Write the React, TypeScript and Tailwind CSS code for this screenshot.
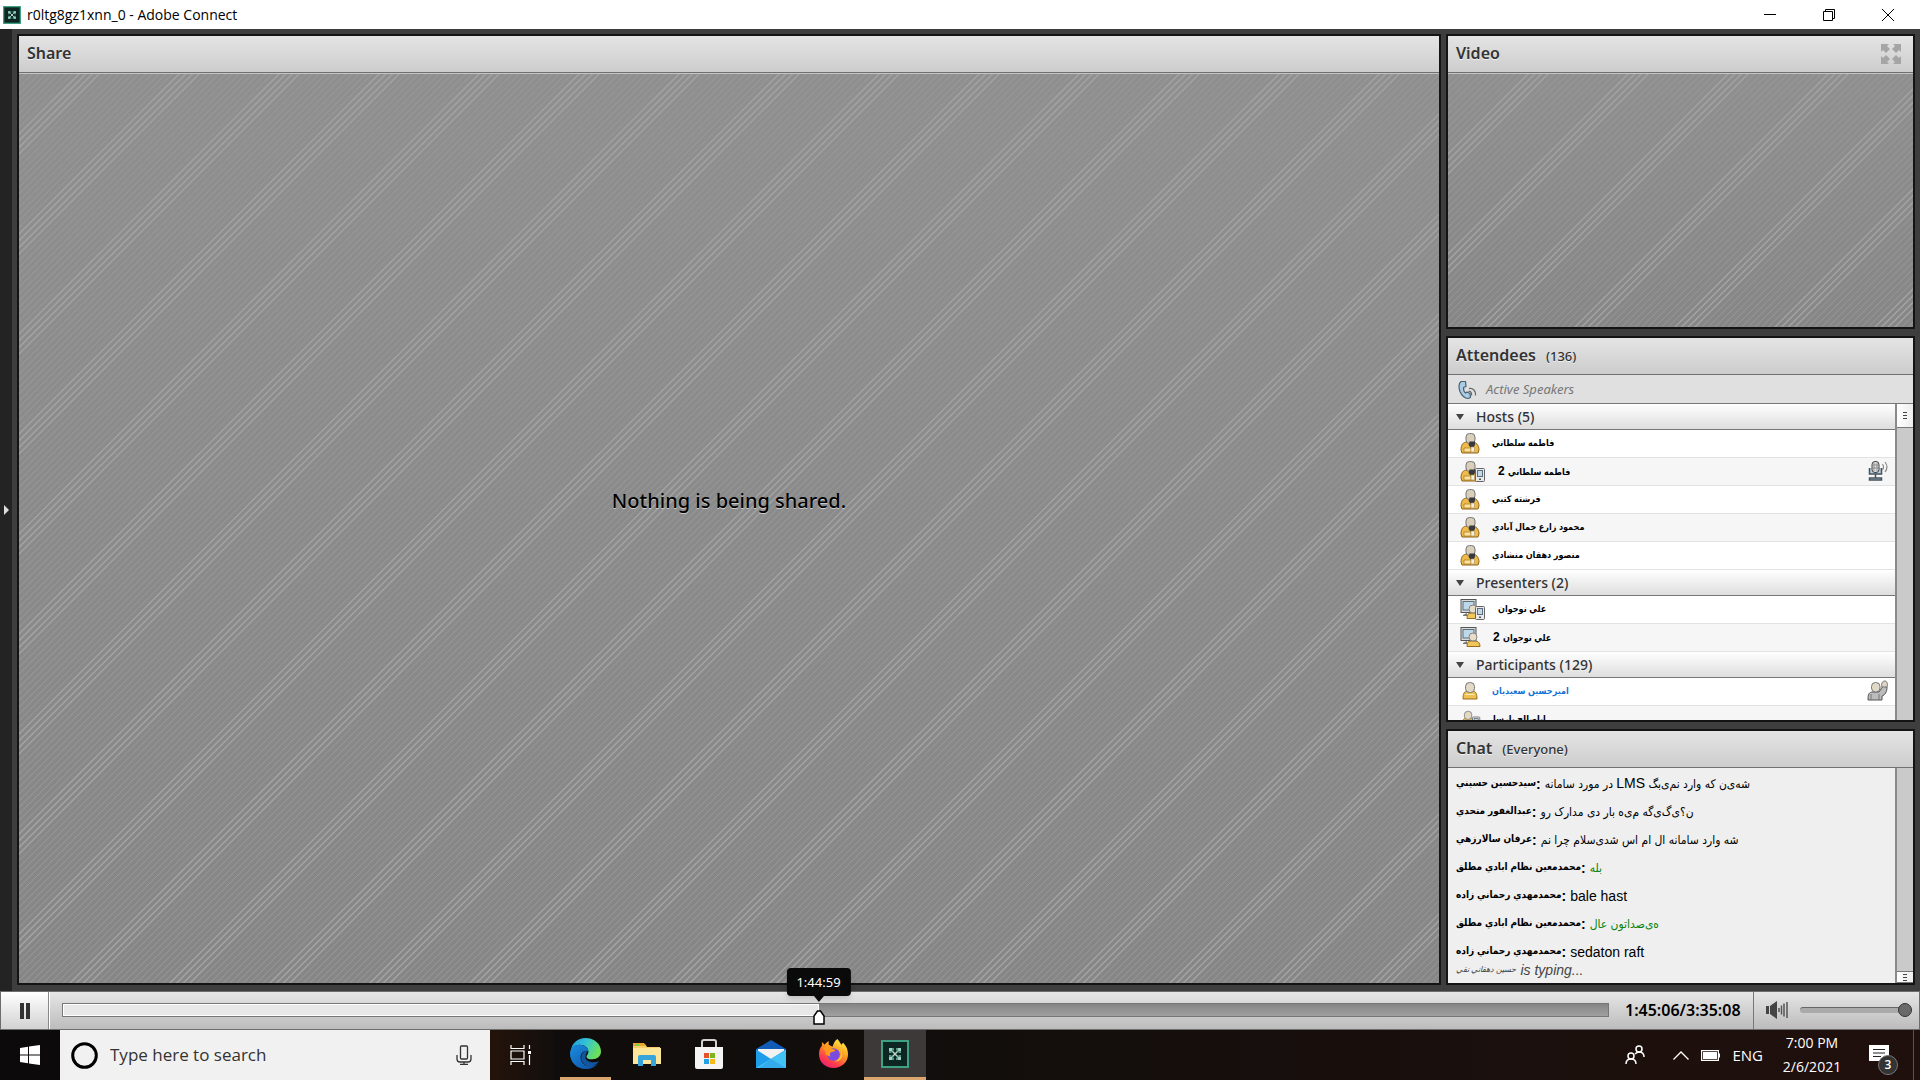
// src/App.tsx
import React, { useState } from 'react';

type IconProps = { className?: string };

/* ---------- Pod chrome ---------- */

interface PodProps {
  title: string;
  note?: string;
  className?: string;
  action?: React.ReactNode;
  children: React.ReactNode;
}

const Pod: React.FC<PodProps> = ({ title, note, className = '', action, children }) => (
  <section className={`flex flex-col min-h-0 min-w-0 border-2 border-[#141414] bg-[#efefef] overflow-hidden ${className}`}>
    <header className="flex items-center justify-between h-[37px] shrink-0 pl-2 pr-3 border-b border-[#707070] bg-linear-to-b from-[#e4e4e4] to-[#cdcdcd]">
      <h2 className="flex items-baseline gap-2.5 pb-0.5 text-base font-semibold text-[#333] [text-shadow:0_1px_0_#f2f2f2]">
        {title}
        {note && <span className="text-[13px] font-medium">{note}</span>}
      </h2>
      {action}
    </header>
    {children}
  </section>
);

const STRIPES = Array.from({ length: 30 }, (_, k) => ({ x: (k * 100) / 15, bright: k % 15 >= 9 && k % 15 <= 12 }));

const Stripes: React.FC<{ id: string; offset?: number; children?: React.ReactNode }> = ({ id, offset = 0, children }) => (
  <div className="relative flex flex-1 min-h-0 items-center justify-center border-t border-[#c4c4c4] bg-linear-to-b from-[#8f8f8f] to-[#868686]">
    <svg className="absolute inset-0 w-full h-full" aria-hidden="true">
      <defs>
        <pattern id={id} x={offset} width="100" height="100" patternUnits="userSpaceOnUse">
          {STRIPES.map(({ x, bright }) => (
            <line
              key={x}
              x1={x + 5}
              y1="-5"
              x2={x - 105}
              y2="105"
              stroke={bright ? '#a2a2a2' : '#9e9e9e'}
              strokeWidth={bright ? 1.5 : 0.8}
            />
          ))}
        </pattern>
      </defs>
      <rect width="100%" height="100%" fill={`url(#${id})`} />
    </svg>
    {children}
  </div>
);

const Scrollbar: React.FC<{ thumb: 'top' | 'bottom' }> = ({ thumb }) => (
  <div className={`flex flex-col w-[18px] shrink-0 border-l-2 border-[#8a8a8a] bg-[#cacaca] ${thumb === 'top' ? 'justify-start' : 'justify-end'}`}>
    <button
      type="button"
      aria-label="Scroll"
      className={`flex flex-col items-center justify-center gap-0.5 border-b border-[#777] bg-linear-to-r from-white to-[#ededed] ${
        thumb === 'top' ? 'h-6' : 'h-3 border-t'
      }`}
    >
      <span className="w-1 h-px bg-[#444]" />
      <span className="w-1 h-px bg-[#444]" />
      <span className="w-1 h-px bg-[#444]" />
    </button>
  </div>
);

/* ---------- Attendee icons ---------- */

const Device: React.FC = () => (
  <g>
    <rect x="15.5" y="8.5" width="9" height="13" rx="1" fill="#e9e9e9" stroke="#666" />
    <rect x="17.5" y="10.5" width="5" height="6" fill="#c3d9e8" stroke="#5c6f7d" />
    <rect x="19" y="18.5" width="2" height="1.5" fill="#555" />
  </g>
);

const HostIcon: React.FC<{ device?: boolean }> = ({ device }) => (
  <svg width={device ? 26 : 20} height="22" viewBox={device ? '0 0 26 22' : '0 0 20 22'} aria-hidden="true">
    <path d="M1 18c0-5 2-8 6-8h5c4 0 7 3 7 8l-1 3H2z" fill="#eebb49" stroke="#94621a" />
    <path d="M4 16h7v4H4z" fill="#fbe39c" stroke="#a8741d" strokeWidth=".7" />
    <rect x="6" y="1.500" width="9" height="10" rx="3.500" fill="#d8ceb9" stroke="#777" />
    <path d="M9.500 9.500H15V13l-1.500 2.500h-3L8.500 13z" fill="#393a3d" />
    <rect x="11" y="15" width="3.500" height="5" fill="#f4efe0" stroke="#a98b50" strokeWidth=".6" />
    {device && <Device />}
  </svg>
);

const PresenterIcon: React.FC<{ device?: boolean }> = ({ device }) => (
  <svg width={device ? 26 : 21} height="22" viewBox={device ? '0 0 26 22' : '0 0 21 22'} aria-hidden="true">
    <rect x="1" y="1.500" width="15" height="13" fill="#dadada" stroke="#555" />
    <rect x="3" y="3.500" width="11" height="8.500" fill="#bcd8ea" stroke="#5b6f7c" />
    <path d="M3 17l4-2v3H3z" fill="#777" />
    <path d="M7 20c0-3 1-5 4-5h4c3 0 5 2 5 5v.500H7z" fill="#f1c65a" stroke="#9a6a1f" />
    <circle cx="13" cy="11" r="4" fill="#e7ddc9" stroke="#888" />
    {device && <Device />}
  </svg>
);

const ParticipantIcon: React.FC<{ device?: boolean }> = ({ device }) => (
  <svg width={device ? 21 : 20} height="20" viewBox={device ? '0 0 26 22' : '0 0 20 20'} aria-hidden="true">
    <path d="M3 18c0-5 1-8 5-8h4c4 0 5 3 5 8z" fill="#eec052" stroke="#9a6a1f" />
    <path d="M5.500 13.500h9" stroke="#fff0bb" />
    <rect x="5.500" y="1.500" width="9" height="10" rx="4" fill="#e2d9c6" stroke="#777" />
    {device && <Device />}
  </svg>
);

const PhoneIcon: React.FC<IconProps> = ({ className }) => (
  <svg className={className} width="20" height="20" viewBox="0 0 20 20" aria-hidden="true">
    <path
      d="M3 1.500C1 3 .5 7 2 11.500c1.500 4 5 7 8 7l2.500-1-.500-4-3-1.500-1.500 1C6 12 5.500 9 5.500 7.500L8 6.500l-.500-5z"
      fill="#a9cbe3"
      stroke="#47606f"
      strokeWidth="1.200"
      strokeLinejoin="round"
    />
    <path d="M10.500 11.500c2-.5 3.500 1 3 4M11 8.500c4-.5 7 2 6.500 7" fill="none" stroke="#666" strokeWidth="1.300" />
  </svg>
);

const MicLiveIcon: React.FC = () => (
  <svg width="22" height="22" viewBox="0 0 22 22" aria-label="Speaking" role="img">
    <path d="M2.500 8v6h12V8" fill="#b6d0e1" stroke="#46525b" strokeWidth="1.500" />
    <rect x="5" y="1.500" width="7" height="11" rx="3" fill="#ddd" stroke="#444" />
    <path d="M7 3v8M10 3v8M5 5h7M5 8h7" stroke="#777" strokeWidth=".7" />
    <path d="M8.500 14v4M2.500 20v-2h12v2z" fill="#b6d0e1" stroke="#46525b" strokeWidth="1.500" />
    <path d="M15.500 4q2 3 0 6M18 2q4 5 0 10" fill="none" stroke="#888" strokeWidth="1.200" />
  </svg>
);

const RaisedHandIcon: React.FC = () => (
  <svg width="22" height="22" viewBox="0 0 22 22" aria-label="Raised hand" role="img">
    <path d="M1 20c0-6 1-8 5-8h6l4-6 4 1c0 5-2 8-5 9v4z" fill="#bcbcbc" stroke="#555" />
    <rect x="4.500" y="2.500" width="8.500" height="9.500" rx="4" fill="#e2d9c6" stroke="#777" />
    <path d="M15 7c-1-3 0-6 3-6 2 0 3 3 2 6z" fill="#ded5c4" stroke="#777" />
    <path d="M4 14v6M12 14v6" stroke="#777" />
  </svg>
);

/* ---------- Attendees ---------- */

interface Person {
  name: string;
  duplicate?: number;
  icon: React.ReactNode;
  status?: React.ReactNode;
  self?: boolean;
}

const GROUPS: { label: string; people: Person[] }[] = [
  {
    label: 'Hosts (5)',
    people: [
      { name: 'فاطمه سلطاني', icon: <HostIcon /> },
      { name: 'فاطمه سلطاني', duplicate: 2, icon: <HostIcon device />, status: <MicLiveIcon /> },
      { name: 'فرشته کتبي', icon: <HostIcon /> },
      { name: 'محمود زارع جمال آبادي', icon: <HostIcon /> },
      { name: 'منصور دهقان منشادي', icon: <HostIcon /> },
    ],
  },
  {
    label: 'Presenters (2)',
    people: [
      { name: 'علي نوجوان', icon: <PresenterIcon device /> },
      { name: 'علي نوجوان', duplicate: 2, icon: <PresenterIcon /> },
    ],
  },
  {
    label: 'Participants (129)',
    people: [
      { name: 'امیرحسین سعیدیان', icon: <ParticipantIcon />, status: <RaisedHandIcon />, self: true },
      { name: 'اباصالح پارسا', icon: <ParticipantIcon device /> },
    ],
  },
];

const AttendeeGroup: React.FC<{ label: string; people: Person[] }> = ({ label, people }) => (
  <div>
    <button
      type="button"
      className="flex items-center w-full h-[26px] pl-2 pt-0.5 gap-3 border-b border-[#777] bg-linear-to-b from-white to-[#dedede] text-sm font-medium text-[#333]"
    >
      <svg width="8" height="6" viewBox="0 0 8 6" aria-hidden="true">
        <path d="M0 0h8L4 6z" fill="#444" />
      </svg>
      {label}
    </button>
    <ul>
      {people.map((person, i) => (
        <li key={i} className="flex items-center h-7 pl-3 pr-1.5 border-b border-[#e2e2e2] bg-white even:bg-[#f6f6f6]">
          <span className="flex min-w-5 mr-3">{person.icon}</span>
          <bdi
            className={`font-['Liberation_Sans','DejaVu_Sans_Condensed','DejaVu_Sans',sans-serif] text-[9px] leading-4 font-bold ${
              person.self ? 'text-[#1673d6]' : 'text-black'
            }`}
          >
            {person.name}
            {person.duplicate && <span className="text-xs leading-4"> {person.duplicate}</span>}
          </bdi>
          <span className="ml-auto">{person.status}</span>
        </li>
      ))}
    </ul>
  </div>
);

/* ---------- Chat ---------- */

interface Message {
  from: string;
  text: React.ReactNode;
  latin?: boolean;
  green?: boolean;
}

const MESSAGES: Message[] = [
  {
    from: 'سيدحسين حسيني',
    text: (
      <>
        در مورد سامانه <span className="text-sm leading-5">LMS</span> شه‌ی‌ن که وارد نم‌ی‌بگ
      </>
    ),
  },
  { from: 'عبدالغفور متحدي', text: 'ن؟ی‌گ‌ی‌گه م‌ی‌ه بار دی مدارک رو' },
  { from: 'عرفان سالارزهي', text: 'شه وارد سامانه ال ام اس شدی‌سلام چرا نم' },
  { from: 'محمدمعين نظام ابادي مطلق', text: 'بله', green: true },
  { from: 'محمدمهدي رحماني زاده', text: 'bale hast', latin: true },
  { from: 'محمدمعين نظام ابادي مطلق', text: 'ه‌ی‌صداتون عال', green: true },
  { from: 'محمدمهدي رحماني زاده', text: 'sedaton raft', latin: true },
];

const Chat: React.FC = () => (
  <div className="flex flex-1 min-h-0">
    <div className="flex-1 min-w-0 overflow-hidden pl-2 pt-1.5 font-['Liberation_Sans','DejaVu_Sans_Condensed','DejaVu_Sans',sans-serif] text-sm text-black">
      <ul className="flex flex-col gap-2">
        {MESSAGES.map((message, i) => (
          <li key={i} className="flex items-center gap-1 h-5 whitespace-nowrap">
            <span className="flex items-center font-bold">
              <bdi className="text-[10px]">{message.from}</bdi>:
            </span>
            <span
              dir="ltr"
              className={`leading-5 ${message.latin ? 'text-sm' : 'text-xs'} ${message.green ? 'text-[#0a820a]' : ''}`}
            >
              {message.text}
            </span>
          </li>
        ))}
      </ul>
      <p className="flex items-center gap-1 h-4 italic text-[#444]">
        <bdi className="text-[8px]">حسين دهقاني نقي</bdi>
        <span>is typing...</span>
      </p>
    </div>
    <Scrollbar thumb="bottom" />
  </div>
);

/* ---------- Playback bar ---------- */

const DURATION = 12908;

const Playback: React.FC = () => {
  const [time, setTime] = useState(6312);
  const [volume, setVolume] = useState(95);
  const progress = (time / DURATION) * 100;

  return (
    <footer className="flex h-[39px] shrink-0 border border-[#6d6d6d] bg-linear-to-b from-[#e6e6e6] to-[#bcbcbc]">
      <button
        type="button"
        aria-label="Pause"
        className="flex items-center justify-center gap-0.5 w-12 border-r border-[#888] bg-linear-to-b from-white to-[#d2d2d2]"
      >
        <span className="w-1 h-4 bg-[#333]" />
        <span className="w-1 h-4 bg-[#333]" />
      </button>

      <div className="flex flex-1 items-center pl-3 pb-0.5 border-l border-white">
        <div className="relative flex-1 h-3.5 border border-[#777] bg-linear-to-b from-[#858585] to-[#a0a0a0]">
          <div className="h-full border border-white bg-[#e8e8e8]" style={{ width: `${progress}%` }} />
          <div
            className="absolute bottom-3.5 -translate-x-1/2 flex flex-col items-center"
            style={{ left: `${progress}%` }}
          >
            <span className="px-2.5 rounded-sm bg-[#0a0a0a] text-[13px] leading-7 text-white shadow-md">1:44:59</span>
            <svg width="10" height="6" viewBox="0 0 10 6" aria-hidden="true">
              <path d="M0 0h10L5 6z" fill="#0a0a0a" />
            </svg>
          </div>
          <svg
            className="absolute top-1.5 -translate-x-1/2"
            style={{ left: `${progress}%` }}
            width="12"
            height="15"
            viewBox="0 0 12 15"
            aria-hidden="true"
          >
            <path d="M1 14V6l3.500-5h3L11 6v8z" fill="#fff" stroke="#000" strokeWidth="1.500" />
          </svg>
          <input
            type="range"
            aria-label="Seek"
            min={0}
            max={DURATION}
            value={time}
            onChange={(e) => setTime(Number(e.target.value))}
            className="absolute inset-0 w-full opacity-0"
          />
        </div>
        <span className="w-36 pl-4 text-base leading-5 font-semibold text-black">1:45:06/3:35:08</span>
      </div>

      <div className="flex items-center w-[166px] gap-3 pl-3 pr-2 pb-0.5 border-l border-[#777]">
        <svg width="22" height="18" viewBox="0 0 22 18" aria-hidden="true">
          <path d="M0 5h3v8H0zM4 5l7-5v18l-7-5z" fill="#444" />
          <path d="M13 7v4M15.500 4.500v9M18 2.500v13M21 1v16" stroke="#555" strokeWidth="1.500" />
        </svg>
        <div className="relative flex items-center flex-1 h-4">
          <div className="w-full h-1.5 rounded-full border-t border-[#666] bg-[#aaa]" />
          <span
            className="absolute size-3.5 -translate-x-1/2 rounded-full border border-[#333] bg-[#6a6a6a]"
            style={{ left: `${volume}%` }}
          />
          <input
            type="range"
            aria-label="Volume"
            value={volume}
            onChange={(e) => setVolume(Number(e.target.value))}
            className="absolute inset-0 w-full opacity-0"
          />
        </div>
      </div>
    </footer>
  );
};

/* ---------- Taskbar icons ---------- */

const EdgeIcon: React.FC = () => (
  <svg width="31" height="31" viewBox="0 0 32 32" aria-hidden="true">
    <defs>
      <linearGradient id="edge-top" x1="0" y1="0" x2="1" y2=".4">
        <stop offset="0" stopColor="#2397dd" />
        <stop offset=".5" stopColor="#32c3d8" />
        <stop offset="1" stopColor="#6be05a" />
      </linearGradient>
      <linearGradient id="edge-low" x1="0" y1="0" x2="1" y2="1">
        <stop offset="0" stopColor="#1b8fe0" />
        <stop offset="1" stopColor="#0c4ba0" />
      </linearGradient>
    </defs>
    <path d="M1 13C2 5 8 0 16 0c9 0 16 6 16 14 0 5-4 8-9 8-4 0-6-1-6-3 0-1 2-2 2-5 0-4-4-7-9-7-5 0-8 3-9 6z" fill="url(#edge-top)" />
    <path d="M0 16c0-5 4-9 9-9 6 0 10 3 10 7-4-2-8 1-8 6 0 6 5 9 10 9 4 0 7-2 8-3-3 4-7 6-13 6C7 32 0 25 0 16z" fill="url(#edge-low)" />
    <path d="M17 13c-6 1-8 11-1 15 5 3 11 0 14-4-8 3-15-1-14-5 0-2 2-3 1-6z" fill="#14559f" />
  </svg>
);

const FolderIcon: React.FC = () => (
  <svg width="28" height="24" viewBox="0 0 28 24" aria-hidden="true">
    <path d="M0 2h12l2 3h13v17H0z" fill="#f7cf69" />
    <path d="M0 1h11l2 3H0z" fill="#e8a62d" />
    <path d="M2 2h4v2H2z" fill="#7bcf4c" />
    <path d="M0 6h28v16H0z" fill="#fde59a" />
    <path d="M5 24v-9q0-2 2-2h14q2 0 2 2v9h-5v-6h-8v6z" fill="#37a5dc" />
  </svg>
);

const StoreIcon: React.FC = () => (
  <svg width="30" height="30" viewBox="0 0 30 30" aria-hidden="true">
    <path d="M8 11V3q0-2 2-2h10q2 0 2 2v8" fill="none" stroke="#d2d2d2" strokeWidth="2" />
    <path d="M1 8h28v20q0 2-2 2H3q-2 0-2-2z" fill="#f4f4f4" />
    <path d="M10 14h5v5h-5z" fill="#e5532b" />
    <path d="M16 14h5v5h-5z" fill="#7fb41e" />
    <path d="M10 20h5v5h-5z" fill="#22a2e6" />
    <path d="M16 20h5v5h-5z" fill="#f9b91a" />
  </svg>
);

const MailIcon: React.FC = () => (
  <svg width="30" height="28" viewBox="0 0 30 28" aria-hidden="true">
    <path d="M0 9L15 0l15 9v6H0z" fill="#0f5bb5" />
    <path d="M2 9h26v8L15 24 2 17z" fill="#f2f2f2" />
    <path d="M0 9.500L15 19 30 9.500V28H0z" fill="#1e9de8" />
    <path d="M30 9.500L0 28h30z" fill="#43c3f5" />
    <path d="M3 28l12-9 15 9z" fill="#2a9be6" opacity=".6" />
  </svg>
);

const FirefoxIcon: React.FC = () => (
  <svg width="29" height="29" viewBox="0 0 30 30" aria-hidden="true">
    <defs>
      <linearGradient id="fox" x1=".8" y1="0" x2=".2" y2="1">
        <stop offset="0" stopColor="#fff04a" />
        <stop offset=".4" stopColor="#ff9c20" />
        <stop offset=".75" stopColor="#ff3b4d" />
        <stop offset="1" stopColor="#e51a7c" />
      </linearGradient>
    </defs>
    <path
      d="M19 0c2 2 3 4 4 6l2-2c4 4 5 8 5 12 0 8-7 14-15 14S0 24 0 16c0-4 1-7 3-9V3l3 3c1-2 3-3 4-4v4l4 2c1-3 2-6 5-8z"
      fill="url(#fox)"
    />
    <circle cx="15" cy="16" r="6.500" fill="#7a4be0" />
    <path d="M4 9c3-2 7-1 9 1l4 1c0 2-3 2-5 3-1 1-1 3 0 4-4 0-6-3-5-5z" fill="#ff9a1f" />
    <path d="M19 7c6 4 5 14-3 16 8 1 12-8 3-16z" fill="#ffc531" />
  </svg>
);

const ConnectIcon: React.FC<{ size: number }> = ({ size }) => (
  <svg width={size} height={size} viewBox="0 0 28 28" aria-hidden="true">
    <rect x="1" y="1" width="26" height="26" fill="#0d2621" stroke="#3fa184" strokeWidth="2" />
    <path d="M10 10l8 8M18 10l-8 8" stroke="#b9d6cb" strokeWidth="1.500" />
    <path d="M8 8h5v2l-3 3H8zM20 8h-5v2l3 3h2zM8 20h5v-2l-3-3H8zM20 20h-5v-2l3-3h2z" fill="#4e9c85" />
    <path d="M8 8h3v3H8zM17 8h3v3h-3zM8 17h3v3H8zM17 17h3v3h-3z" fill="#a7cfc1" />
  </svg>
);

const APPS = [
  { name: 'Microsoft Edge', icon: <EdgeIcon />, running: true },
  { name: 'File Explorer', icon: <FolderIcon /> },
  { name: 'Microsoft Store', icon: <StoreIcon /> },
  { name: 'Mail', icon: <MailIcon /> },
  { name: 'Firefox', icon: <FirefoxIcon /> },
];

const Taskbar: React.FC = () => (
  <nav className="flex h-[50px] shrink-0 bg-linear-to-r from-[#0c0a0a] via-[#120e0c] to-[#20100d] font-['Open_Sans',sans-serif] text-white">
    <button type="button" aria-label="Start" className="flex items-center justify-center w-[60px]">
      <svg width="20" height="20" viewBox="0 0 20 20" aria-hidden="true">
        <path d="M0 3l8-1.200V9.500H0zM9 1.600L20 0v9.500H9zM0 10.500h8v7.700L0 17zM9 10.500h11V20L9 18.400z" fill="#fff" />
      </svg>
    </button>
    <div className="flex items-center w-[430px] pl-[11px] pr-[18px] gap-3 bg-[#f1f1f1] text-[#333]">
      <svg width="27" height="27" viewBox="0 0 27 27" aria-hidden="true">
        <circle cx="13.500" cy="13.500" r="11.800" fill="none" stroke="#000" strokeWidth="3" />
      </svg>
      <input
        type="text"
        aria-label="Search"
        placeholder="Type here to search"
        className="flex-1 min-w-0 bg-transparent text-[17px] placeholder:text-[#333] outline-none"
      />
      <button type="button" aria-label="Voice search">
        <svg width="16" height="20" viewBox="0 0 16 20" fill="none" stroke="#333" strokeWidth="1.300" aria-hidden="true">
          <rect x="4.500" y="1" width="7" height="13" rx="1" />
          <path d="M1 10v4q0 3 3 3h8q3 0 3-3v-4M8 17v2.500M4 19.400h8" />
        </svg>
      </button>
    </div>
    <button type="button" aria-label="Task view" className="flex items-center w-16 pl-5 bg-linear-to-r from-[#24130a] to-[#120e0c]">
      <svg width="22" height="20" viewBox="0 0 22 20" fill="none" stroke="#fff" strokeWidth="1.200" aria-hidden="true">
        <path d="M1 0v3.500h13V0M1 6h13v8H1zM1 20v-3.500h13V20M19.500 0v4M19.500 10v10" />
        <path d="M18 6h3v3h-3z" fill="#fff" stroke="none" />
      </svg>
    </button>
    {APPS.map((app) => (
      <button key={app.name} type="button" aria-label={app.name} className="flex flex-col items-center w-[62px]">
        <span className="flex flex-1 items-center">{app.icon}</span>
        <span className={`w-[51px] h-[3px] ${app.running ? 'bg-[#d9a670]' : ''}`} />
      </button>
    ))}
    <button type="button" aria-label="Adobe Connect" className="flex flex-col items-center w-[62px] bg-[#3d3939]">
      <span className="flex flex-1 items-center">
        <ConnectIcon size={28} />
      </span>
      <span className="w-full h-[3px] bg-[#d9a670]" />
    </button>

    <div className="flex items-center ml-auto pr-1.5">
      <button type="button" aria-label="People" className="flex mr-7">
        <svg width="20" height="20" viewBox="0 0 20 20" fill="none" stroke="#fff" strokeWidth="1.500" aria-hidden="true">
          <circle cx="14" cy="4" r="3" />
          <circle cx="6" cy="11" r="3" />
          <path d="M1 19q0-5 5-5t5 5M10 9q2-2 4-2 5 0 5 5" />
        </svg>
      </button>
      <button type="button" aria-label="Show hidden icons" className="flex mr-3">
        <svg width="16" height="9" viewBox="0 0 16 9" fill="none" stroke="#fff" strokeWidth="1.300" aria-hidden="true">
          <path d="M.5 8.500L8 1l7.500 7.500" />
        </svg>
      </button>
      <svg className="mr-3" width="19" height="11" viewBox="0 0 19 11" aria-label="Battery" role="img">
        <path d="M.6.6h16.800v9.800H.600z" fill="none" stroke="#fff" strokeWidth="1.200" />
        <path d="M2 2h14v7H2zM18 3.500h1v4h-1z" fill="#fff" />
      </svg>
      <span className="text-[15px] leading-6">ENG</span>
      <time className="w-[98px] text-center text-sm leading-6">
        7:00 PM
        <br />
        2/6/2021
      </time>
      <button type="button" aria-label="Notifications" className="relative w-10 h-[50px]">
        <svg className="absolute left-2 top-[15px]" width="20" height="19" viewBox="0 0 20 19" aria-hidden="true">
          <path d="M0 0h20v16h-5l-4 3v-3H0z" fill="#fff" />
          <path d="M4 4.500h12M4 8h12M4 11.500h8" stroke="#222" />
        </svg>
        <span className="absolute left-[17px] top-[25px] flex items-center justify-center size-5 rounded-full border border-[#777] bg-[#333] text-xs font-semibold">
          3
        </span>
      </button>
      <span className="w-px h-[50px] ml-3 bg-[#5a5250]" />
    </div>
  </nav>
);

/* ---------- Window ---------- */

const App: React.FC = () => {
  return (
    <div className="flex flex-col h-screen overflow-hidden bg-[#3e3e3e] font-['Noto_Sans',sans-serif]">
      <header className="flex items-center justify-between h-[29px] shrink-0 pl-[3px] pr-[26px] bg-white text-black font-['Open_Sans',sans-serif]">
        <h1 className="flex items-center gap-1.5 text-sm">
          <ConnectIcon size={18} />
          r0ltg8gz1xnn_0 - Adobe Connect
        </h1>
        <div className="flex items-center gap-[47px]">
          <button type="button" aria-label="Minimize">
            <svg width="12" height="12" viewBox="0 0 12 12" stroke="#000" aria-hidden="true">
              <path d="M0 5.500h12" />
            </svg>
          </button>
          <button type="button" aria-label="Restore">
            <svg width="12" height="12" viewBox="0 0 12 12" fill="none" stroke="#000" aria-hidden="true">
              <path d="M.5 2.500h9v9h-9zM2.500 2.500v-2h9v9h-2" />
            </svg>
          </button>
          <button type="button" aria-label="Close">
            <svg width="12" height="12" viewBox="0 0 12 12" stroke="#000" aria-hidden="true">
              <path d="M0 0l12 12M12 0L0 12" />
            </svg>
          </button>
        </div>
      </header>

      <main className="flex flex-1 min-h-0">
        <button type="button" aria-label="Expand side panel" className="flex items-center w-3 mr-[5px] pl-1 bg-[#232323]">
          <svg width="5" height="10" viewBox="0 0 5 10" aria-hidden="true">
            <path d="M0 0l5 5-5 5z" fill="#ddd" />
          </svg>
        </button>
        <div className="flex flex-1 min-w-0 gap-[5px] pt-[5px] pb-1.5 pr-[5px]">
          <Pod title="Share" className="flex-1">
            <Stripes id="share-stripes">
              <p className="relative mb-14 text-xl font-medium text-black [text-shadow:0_1px_0_#ccc]">Nothing is being shared.</p>
            </Stripes>
          </Pod>

          <aside className="flex flex-col w-[469px] gap-[7px]">
            <Pod
              title="Video"
              className="flex-[295]"
              action={
                <button type="button" aria-label="Full screen">
                  <svg width="20" height="20" viewBox="0 0 20 20" fill="#a5a5a5" aria-hidden="true">
                    <path d="M0 0h8L6 2l3 3-4 4-3-3-2 2zM20 0h-8l2 2-3 3 4 4 3-3 2 2zM0 20h8l-2-2 3-3-4-4-3 3-2-2zM20 20h-8l2-2-3-3 4-4 3 3 2-2z" />
                  </svg>
                </button>
              }
            >
              <Stripes id="video-stripes" offset={20} />
            </Pod>

            <Pod title="Attendees" note="(136)" className="flex-[387]">
              <div className="flex items-center h-[29px] shrink-0 pl-2.5 pt-0.5 gap-2 border-b border-[#777] bg-[#e0e0e0] text-[13px] italic text-[#777]">
                <PhoneIcon />
                Active Speakers
              </div>
              <div className="flex flex-1 min-h-0">
                <div className="flex-1 min-w-0 overflow-hidden">
                  {GROUPS.map((group) => (
                    <AttendeeGroup key={group.label} {...group} />
                  ))}
                </div>
                <Scrollbar thumb="top" />
              </div>
            </Pod>

            <Pod title="Chat" note="(Everyone)" className="flex-[256]">
              <Chat />
            </Pod>
          </aside>
        </div>
      </main>

      <Playback />
      <Taskbar />
    </div>
  );
};

export default App;
